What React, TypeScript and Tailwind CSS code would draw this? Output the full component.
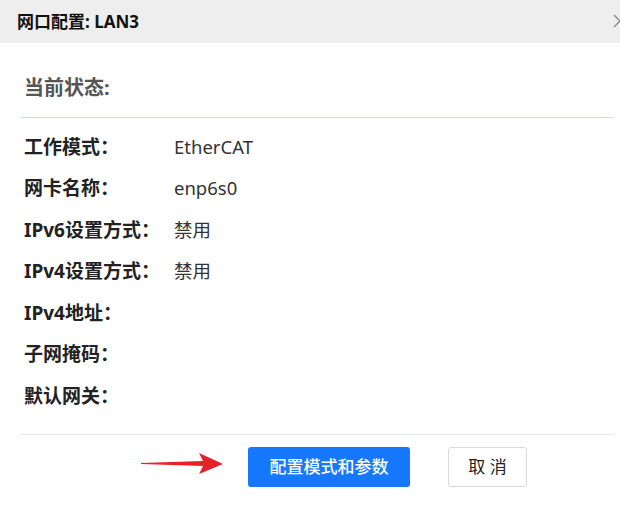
import React from "react";

const rows: [string, string][] = [
  ["工作模式：", "EtherCAT"],
  ["网卡名称：", "enp6s0"],
  ["IPv6设置方式：", "禁用"],
  ["IPv4设置方式：", "禁用"],
  ["IPv4地址：", ""],
  ["子网掩码：", ""],
  ["默认网关：", ""],
];

export default function App() {
  return (
    <div
      className="w-[620px] h-[509px] bg-white overflow-hidden relative"
      style={{ fontFamily: '"Noto Sans", "Noto Sans CJK SC", sans-serif' }}
    >
      <div className="h-[43px] bg-[#eeeeee] flex items-center pl-[17px] relative">
        <span className="text-[17px] font-bold text-[#111] leading-none">网口配置: LAN3</span>
        <svg className="absolute left-[613px] top-[14px]" width="14" height="14" viewBox="0 0 14 14">
          <path d="M1 1 L13 13 M13 1 L1 13" stroke="#888" strokeWidth="1.4" fill="none" />
        </svg>
      </div>
      <div className="px-[24px] pr-[6px]">
        <div className="h-[74px] flex items-center pt-[16px] text-[20px] font-bold text-[#555] leading-none">
          当前状态:
        </div>
        <div className="h-px bg-[#bfe3f7] ml-[-4px] mr-0" />
        <div className="pt-[8px]">
          {rows.map(([k, v]) => (
            <div key={k} className="h-[41.5px] flex items-center">
              <span className="w-[150px] text-[19px] font-bold text-[#222]">{k}</span>
              <span className="text-[18.5px] text-[#333]">{v}</span>
            </div>
          ))}
        </div>
        <div className="mt-[17px] h-px bg-[#e6e6e6] ml-[-4px]" />
        <div className="flex items-center pt-[12px] relative">
          <svg className="absolute left-[117px] top-[17px]" width="84" height="24" viewBox="0 0 84 24">
            <polygon points="0,11 62,9 58,1 82,12 58,22 62,14 0,12" fill="#e8202a" />
          </svg>
          <div className="ml-[224px] w-[162px] h-[40px] bg-[#1677ff] rounded-[3px] flex items-center justify-center text-white text-[17px] font-medium">
            配置模式和参数
          </div>
          <div className="ml-[38px] w-[79px] h-[40px] border border-[#d9d9d9] rounded-[3px] flex items-center justify-center text-[17px] text-[#222]">
            取 消
          </div>
        </div>
      </div>
    </div>
  );
}
